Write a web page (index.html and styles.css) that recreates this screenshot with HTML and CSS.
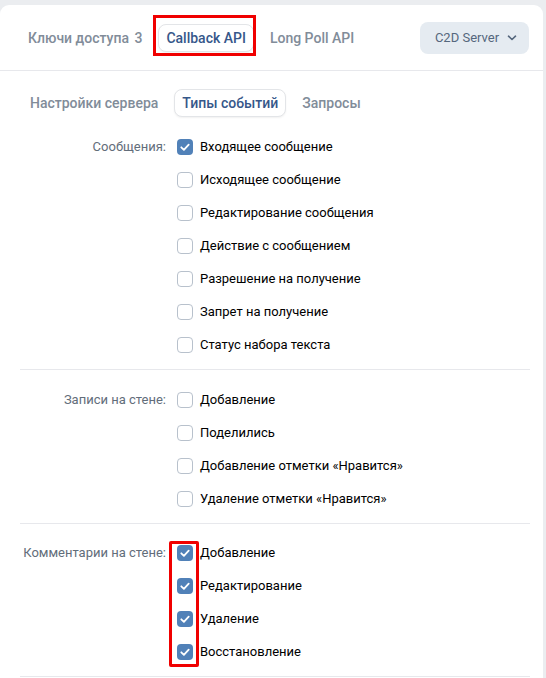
FILE: index.html
```html
<!DOCTYPE html>
<html lang="ru">
<head>
<meta charset="utf-8">
<link rel="stylesheet" href="styles.css">
</head>
<body>
<div class="card">
  <div class="header">
    <div class="tabs">
      <div class="tab">Ключи доступа <span class="count">3</span></div>
      <div class="tab tab-active tab-marked">Callback API</div>
      <div class="tab">Long Poll API</div>
    </div>
    <button class="server-btn">C2D Server
      <svg class="chev" width="10" height="6" viewBox="0 0 10 6"><path d="M1.5 1.2 L5 4.5 L8.5 1.2" fill="none" stroke="#55677d" stroke-width="1.6" stroke-linecap="round" stroke-linejoin="round"/></svg>
    </button>
  </div>

  <div class="subtabs">
    <div class="tab">Настройки сервера</div>
    <div class="tab tab-active">Типы событий</div>
    <div class="tab">Запросы</div>
  </div>

  <div class="section">
    <div class="label">Сообщения:</div>
    <div class="items">
      <div class="item"><span class="cb on"><svg viewBox="0 0 16 16"><path d="M4.3 8.3 L6.9 10.8 L11.7 5.6" /></svg></span>Входящее сообщение</div>
      <div class="item"><span class="cb"></span>Исходящее сообщение</div>
      <div class="item"><span class="cb"></span>Редактирование сообщения</div>
      <div class="item"><span class="cb"></span>Действие с сообщением</div>
      <div class="item"><span class="cb"></span>Разрешение на получение</div>
      <div class="item"><span class="cb"></span>Запрет на получение</div>
      <div class="item"><span class="cb"></span>Статус набора текста</div>
    </div>
  </div>

  <div class="section">
    <div class="label">Записи на стене:</div>
    <div class="items">
      <div class="item"><span class="cb"></span>Добавление</div>
      <div class="item"><span class="cb"></span>Поделились</div>
      <div class="item"><span class="cb"></span>Добавление отметки «Нравится»</div>
      <div class="item"><span class="cb"></span>Удаление отметки «Нравится»</div>
    </div>
  </div>

  <div class="section">
    <div class="label">Комментарии на стене:</div>
    <div class="items items-marked">
      <div class="item"><span class="cb on"><svg viewBox="0 0 16 16"><path d="M4.3 8.3 L6.9 10.8 L11.7 5.6" /></svg></span>Добавление</div>
      <div class="item"><span class="cb on"><svg viewBox="0 0 16 16"><path d="M4.3 8.3 L6.9 10.8 L11.7 5.6" /></svg></span>Редактирование</div>
      <div class="item"><span class="cb on"><svg viewBox="0 0 16 16"><path d="M4.3 8.3 L6.9 10.8 L11.7 5.6" /></svg></span>Удаление</div>
      <div class="item"><span class="cb on"><svg viewBox="0 0 16 16"><path d="M4.3 8.3 L6.9 10.8 L11.7 5.6" /></svg></span>Восстановление</div>
    </div>
  </div>
</div>
</body>
</html>
```

FILE: styles.css
```css
*, *::before, *::after { box-sizing: border-box; }

html, body {
  margin: 0;
  padding: 0;
  background: #ebedf0;
  font-family: Roboto, "Noto Sans", Arial, sans-serif;
  -webkit-font-smoothing: antialiased;
}

.card {
  margin-top: 5px;
  width: 543px;
  min-height: 700px;
  background: #fff;
  border-radius: 9px 9px 0 0;
}

.header {
  height: 66px;
  border-bottom: 1px solid #e7e8ec;
  display: flex;
  align-items: center;
  justify-content: space-between;
  padding: 0 14px 0 20px;
}

.tabs, .subtabs {
  display: flex;
  align-items: center;
  gap: 8px;
}

.tab {
  position: relative;
  height: 28px;
  padding: 0 7px;
  display: flex;
  align-items: center;
  border: 1px solid transparent;
  border-radius: 8px;
  font-size: 14px;
  font-weight: 500;
  color: #818c99;
  white-space: pre;
}

.count {
  margin-left: 2px;
}

.tab-active {
  background: #fff;
  border-color: #e3e5e8;
  box-shadow: 0 1px 2px rgba(0, 0, 0, 0.06);
  color: #36578a;
}

.tab-marked::after {
  content: "";
  position: absolute;
  left: -6px;
  right: -3px;
  top: -10px;
  bottom: -5px;
  border: 3px solid #f00000;
}

.server-btn {
  height: 32px;
  width: 109px;
  border: none;
  border-radius: 8px;
  background: #e5ebf1;
  color: #55677d;
  font-family: inherit;
  font-size: 13px;
  font-weight: 400;
  display: flex;
  align-items: center;
  justify-content: center;
  gap: 8px;
  padding: 0 0 0 3px;
}

.chev { display: block; margin-top: 1px; }

.subtabs {
  padding: 18px 0 0 22px;
}

.section {
  margin: 0 13px 0 20px;
  border-bottom: 1px solid #e7e8ec;
  display: grid;
  grid-template-columns: 146px 1fr;
  column-gap: 11px;
  padding: 13px 0 8px;
}

.section:last-child {
  padding-top: 12px;
}

.label {
  text-align: right;
  font-size: 13px;
  line-height: 33px;
  color: #626d7a;
}

.items {
  position: relative;
  display: flex;
  flex-direction: column;
}

.items-marked::before {
  content: "";
  position: absolute;
  left: -8px;
  top: 5px;
  width: 30px;
  height: 126px;
  border: 3px solid #f00000;
  border-radius: 2px;
  pointer-events: none;
}

.item {
  height: 33px;
  display: flex;
  align-items: center;
  font-size: 13px;
  color: #000;
}

.cb {
  width: 16px;
  height: 16px;
  flex: none;
  margin-right: 7px;
  border: 1.5px solid #b8c1cc;
  border-radius: 4px;
  background: #fff;
  display: flex;
  align-items: center;
  justify-content: center;
}

.cb.on {
  border: none;
  background: #5181b8;
}

.cb svg {
  width: 16px;
  height: 16px;
  display: block;
}

.cb svg path {
  fill: none;
  stroke: #fff;
  stroke-width: 1.8;
  stroke-linecap: round;
  stroke-linejoin: round;
}
```
